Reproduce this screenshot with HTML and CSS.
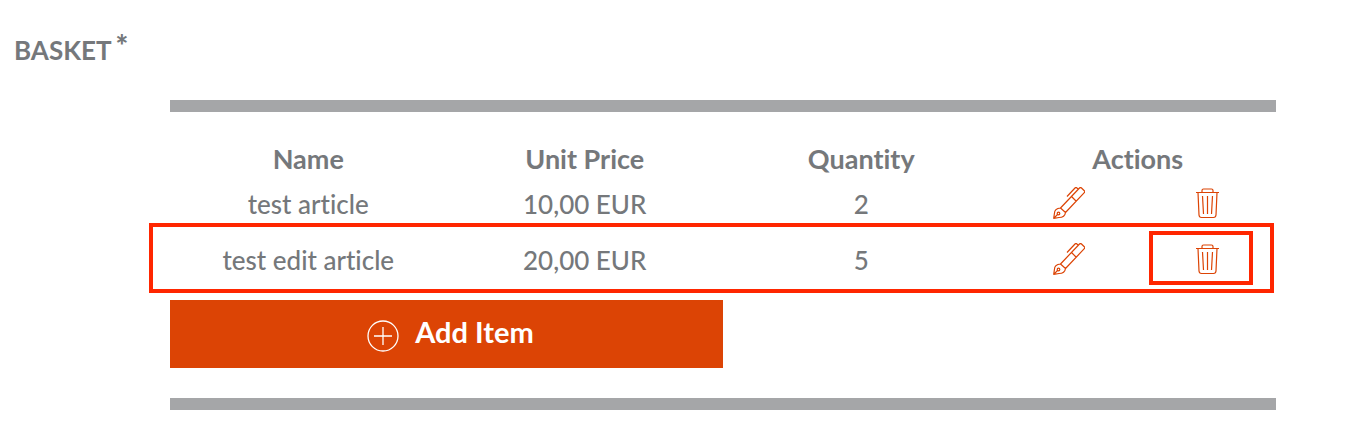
FILE: index.html
```html
<!DOCTYPE html>
<html lang="en">
<head>
<meta charset="utf-8">
<title>Basket</title>
<link rel="stylesheet" href="styles.css">
</head>
<body>
<svg class="symbols" aria-hidden="true">
  <symbol id="pen" viewBox="0 0 32 32">
    <path d="M7.500 21 26.500 1Q27.500 0 28.500 1L31.300 3.700Q32.300 4.700 31.300 5.700L12.500 25.500Z M18.500 9.500 23 14 M25 2.500 24 1Q23 0 22 1L14 9.500 M7.500 21C3 21.500 1.500 23 1.500 26L.700 31.300 6 30.500C9.500 30.500 12 29 12.500 25.500 M.700 31.300 4.500 27.500"/>
    <circle cx="5.500" cy="26.500" r="1.300"/>
  </symbol>
  <symbol id="trash" viewBox="0 0 32 32">
    <path d="M5 5.500H28 M11 5.500V3.500Q11 2 12.500 2H20.500Q22 2 22 3.500V5.500 M7 5.500 8 28Q8.200 30.500 10.500 30.500H22.500Q24.800 30.500 25 28L26 5.500 M11.500 9 12.500 27 M16.500 9V27 M21.500 9 20.500 27"/>
  </symbol>
</svg>
<main>
  <h1 class="label">BASKET<sup class="required">*</sup></h1>
  <section class="basket">
    <table class="items">
      <thead>
        <tr><th>Name</th><th>Unit Price</th><th>Quantity</th><th>Actions</th></tr>
      </thead>
      <tbody>
        <tr>
          <td>test article</td><td>10,00 EUR</td><td>2</td>
          <td>
            <div class="actions">
              <button class="action" type="button" aria-label="Edit"><svg class="icon"><use href="#pen"/></svg></button>
              <button class="action" type="button" aria-label="Delete"><svg class="icon"><use href="#trash"/></svg></button>
            </div>
          </td>
        </tr>
        <tr class="selected">
          <td class="marked">test edit article</td><td>20,00 EUR</td><td>5</td>
          <td>
            <div class="actions">
              <button class="action" type="button" aria-label="Edit"><svg class="icon"><use href="#pen"/></svg></button>
              <button class="action target" type="button" aria-label="Delete"><svg class="icon"><use href="#trash"/></svg></button>
            </div>
          </td>
        </tr>
      </tbody>
    </table>
    <button class="add" type="button">
      <svg class="plus" viewBox="0 0 32 32" aria-hidden="true"><circle cx="16" cy="16" r="15"/><path d="M7 16H25M16 7V25"/></svg>
      <span class="add-text">Add Item</span>
    </button>
  </section>
</main>
</body>
</html>
```
FILE: styles.css
```css
* {
  box-sizing: border-box;
}

body {
  margin: 0;
  background: #fff;
  color: #75787b;
  font-family: Lato, "Liberation Sans", sans-serif;
  font-size: 26px;
  line-height: 32px;
  font-variant-ligatures: none;
}

.symbols {
  position: absolute;
  width: 0;
  height: 0;
}

.label {
  margin: 0;
  padding: 34px 14px;
  font-size: 26px;
  font-weight: 700;
  line-height: 32px;
}

.required {
  margin-left: 4px;
  font-size: 30px;
  font-weight: 900;
  line-height: 0;
  vertical-align: 3px;
}

.basket {
  margin: 0 96px 28px 170px;
  padding: 30px 0;
  border-top: 12px solid #a5a6a8;
  border-bottom: 12px solid #a5a6a8;
}

.items {
  width: 100%;
  table-layout: fixed;
  border-collapse: collapse;
  text-align: center;
}

th,
td {
  padding: 0;
}

th {
  padding: 1px 0;
  font-size: 27px;
  font-weight: 700;
}

td {
  height: 56px;
  font-weight: 500;
}

.actions {
  display: grid;
  grid-template-columns: 1fr 1fr;
  padding-bottom: 2px;
}

.action {
  position: relative;
  display: flex;
  justify-content: center;
  padding: 0;
  border: 0;
  background: none;
  color: #dc4405;
}

.icon {
  width: 32px;
  height: 32px;
  fill: none;
  stroke: currentColor;
  stroke-width: 1.2;
  stroke-linejoin: round;
}

.selected {
  position: relative;
}

.marked::after,
.target::after {
  content: "";
  position: absolute;
  border: 4px solid #ff2600;
  pointer-events: none;
}

.marked::after {
  inset: -9px 2px -5px -21px;
}

.target::after {
  inset: -12px 23px -10px 11px;
}

.add {
  display: flex;
  align-items: center;
  justify-content: center;
  gap: 16px;
  width: 50%;
  height: 68px;
  margin-top: 12px;
  padding: 0 0 0 8px;
  border: 0;
  background: #dc4405;
  color: #fff;
  font: inherit;
  font-size: 29px;
  font-weight: 700;
}

.add-text {
  padding-bottom: 4px;
}

.plus {
  width: 32px;
  height: 32px;
  margin-top: 4px;
  fill: none;
  stroke: currentColor;
  stroke-width: 1.3;
}
```
